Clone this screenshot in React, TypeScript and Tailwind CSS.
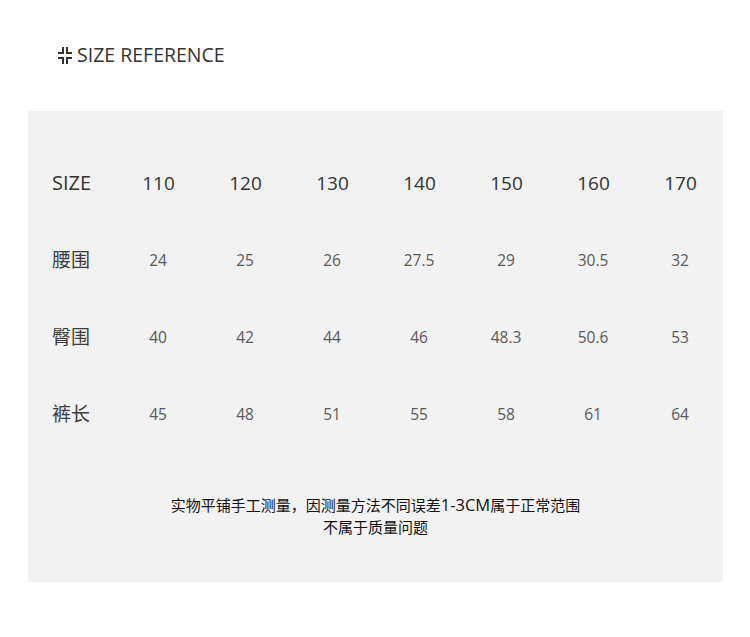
const sizes = ["110", "120", "130", "140", "150", "160", "170"];

const rows = [
  { label: "腰围", values: ["24", "25", "26", "27.5", "29", "30.5", "32"] },
  { label: "臀围", values: ["40", "42", "44", "46", "48.3", "50.6", "53"] },
  { label: "裤长", values: ["45", "48", "51", "55", "58", "61", "64"] },
];

const fontStack =
  "font-['Open_Sans','Noto_Sans_CJK_SC',sans-serif]";

const App = () => (
  <div className={`w-[750px] h-[637px] bg-white ${fontStack}`}>
    <div className="h-[111px] pl-[58px] pt-[42px]">
      <div className="flex items-center gap-[5px] h-[26px] text-[19.5px] leading-[26px] text-[#333333]">
        <svg width="14" height="17" viewBox="0 0 14 17" fill="none" stroke="#333333" strokeWidth="2">
          <path d="M5 0V6H0" />
          <path d="M9 0V6H14" />
          <path d="M0 11H5V17" />
          <path d="M14 11H9V17" />
        </svg>
        <span>SIZE REFERENCE</span>
      </div>
    </div>
    <div className="ml-[28px] w-[695px] h-[471px] bg-[#f2f2f2] pt-[34px]">
      <div className="grid grid-cols-[63px_repeat(7,87px)] pl-6 h-[77px] items-center text-[19px] text-[#333333]">
        <div className="text-[20px] mb-[2px]">SIZE</div>
        {sizes.map((s) => (
          <div key={s} className="text-center">
            {s}
          </div>
        ))}
      </div>
      {rows.map((row) => (
        <div
          key={row.label}
          className="grid grid-cols-[63px_repeat(7,87px)] pl-6 h-[77px] items-center text-[15.5px] text-[#595959]"
        >
          <div className="text-[19px] text-[#3c3c3c]">{row.label}</div>
          {row.values.map((v, i) => (
            <div key={i} className="text-center mr-[1px]">
              {v}
            </div>
          ))}
        </div>
      ))}
      <div className="mt-[41px] text-center text-[15px] leading-[22px] text-[#111111]">
        <p>
          实物平铺手工测量，因测量方法不同误差<span className="text-[16.5px]">1-3CM</span>属于正常范围
        </p>
        <p>不属于质量问题</p>
      </div>
    </div>
  </div>
);

export default App;
